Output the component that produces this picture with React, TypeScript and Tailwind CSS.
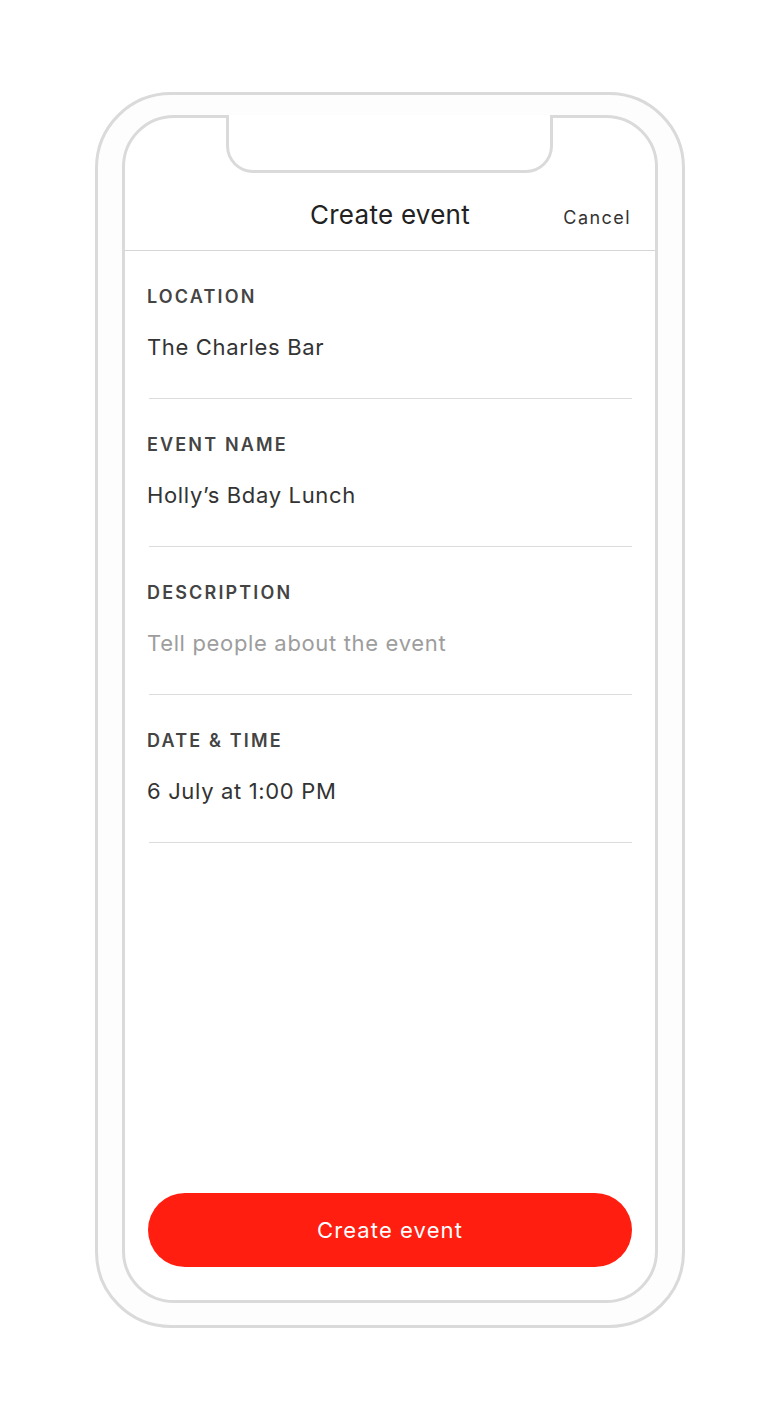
const fields = [
  { label: 'Location', value: 'The Charles Bar' },
  { label: 'Event name', value: 'Holly’s Bday Lunch' },
  { label: 'Description', value: 'Tell people about the event', placeholder: true },
  { label: 'Date & time', value: '6 July at 1:00 PM' },
]

function Field({ label, value, placeholder }: { label: string; value: string; placeholder?: boolean }) {
  return (
    <div>
      <div className="px-[22px] pt-[36px] pb-[37px]">
        <div className="text-[18px] leading-[20px] font-semibold uppercase tracking-[0.12em] text-[#444]">{label}</div>
        <div
          className={`mt-[26px] text-[22px] leading-[28px] tracking-[0.03em] ${placeholder ? 'text-[#9d9d9d]' : 'text-[#333]'}`}
        >
          {value}
        </div>
      </div>
      <div className="ml-[24px] mr-[23px] h-px bg-[#dcdcdc]"></div>
    </div>
  )
}

export default function App() {
  return (
    <div className="w-[780px] h-[1420px] bg-white flex justify-center pt-[92px] font-['Inter',sans-serif]">
      {/* phone frame */}
      <div className="w-[590px] h-[1236px] rounded-[76px] border-[3px] border-[#dadada] bg-[#fdfdfd] px-[24px] pt-[20px] pb-[22px]">
        <div className="relative h-full flex flex-col rounded-[52px] border-[3px] border-[#dadada] bg-white">
          {/* notch */}
          <div className="absolute top-[-3px] left-[101px] w-[327px] h-[58px] border-x-[3px] border-b-[3px] border-[#dadada] rounded-b-[27px] bg-white"></div>

          {/* header */}
          <div className="h-[133px] grid grid-cols-[1fr_auto_1fr] items-end pb-[19px] border-b border-[#d6d6d6]">
            <div></div>
            <div className="text-[26px] leading-[32px] tracking-[0.01em] text-[#222]">Create event</div>
            <div className="text-right pr-[24px] text-[18px] leading-[28px] tracking-[0.08em] text-[#333] mb-[-1px]">Cancel</div>
          </div>

          {fields.map((f) => (
            <Field key={f.label} label={f.label} value={f.value} placeholder={f.placeholder} />
          ))}

          <button className="mt-auto mx-[23px] mb-[33px] h-[74px] rounded-full bg-[#ff1e10] text-white text-[22px] tracking-[0.05em]">
            Create event
          </button>
        </div>
      </div>
    </div>
  )
}
